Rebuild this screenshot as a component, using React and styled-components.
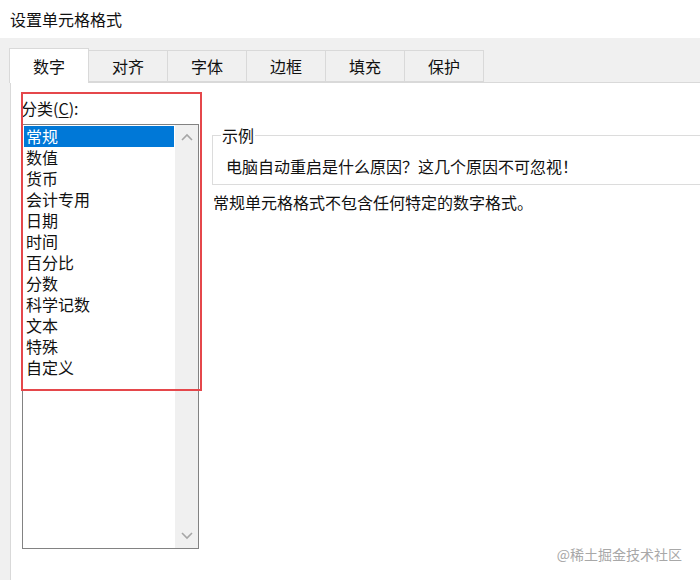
import React from "react";
import styled, { createGlobalStyle } from "styled-components";

const GlobalStyle = createGlobalStyle`
  html, body {
    margin: 0;
    padding: 0;
    background: #ffffff;
  }
  body {
    font-family: "Noto Sans CJK SC", "Noto Sans", sans-serif;
    color: #111111;
  }
`;

const categories = [
  "常规", "数值", "货币", "会计专用", "日期", "时间",
  "百分比", "分数", "科学记数", "文本", "特殊", "自定义",
];

const tabs = ["数字", "对齐", "字体", "边框", "填充", "保护"];

const Dialog = styled.div`
  width: 700px;
  height: 580px;
  display: flex;
  flex-direction: column;
  overflow: hidden;
  position: relative;
`;

const TitleBar = styled.div`
  height: 38px;
  display: flex;
  align-items: center;
  padding-left: 10px;
  font-size: 16px;
  line-height: 20px;
  background: #ffffff;
  flex-shrink: 0;
`;

const Body = styled.div`
  flex: 1;
  display: flex;
  flex-direction: column;
  background: #f0f0f0;
  padding: 10px 0 0 10px;
`;

const TabStrip = styled.div`
  display: flex;
  align-items: flex-start;
  height: 34px;
  position: relative;
  z-index: 1;
`;

const Tab = styled.div`
  box-sizing: border-box;
  display: flex;
  align-items: center;
  justify-content: center;
  font-size: 16px;
  line-height: 20px;
  border: 1px solid #d9d9d9;
  margin-left: -1px;
  ${(p) =>
    p.$active
      ? `
    width: 80px;
    height: 35px;
    background: #ffffff;
    border-bottom: none;
  `
      : `
    width: 80px;
    height: 32px;
    margin-top: 2px;
    background: #f0f0f0;
  `}
`;

const Panel = styled.div`
  flex: 1;
  position: relative;
  display: flex;
  background: #ffffff;
  border-left: 1px solid #d9d9d9;
  border-top: 1px solid #d9d9d9;
  padding: 15px 0 0 11px;
`;

const CategoryColumn = styled.div`
  display: flex;
  flex-direction: column;
  width: 177px;
  flex-shrink: 0;
`;

const FieldLabel = styled.div`
  font-size: 16px;
  line-height: 20px;
  margin-left: -1px;

  u {
    text-underline-offset: 2px;
  }
`;

const ListBox = styled.div`
  box-sizing: border-box;
  margin-top: 6px;
  width: 177px;
  height: 425px;
  border: 1px solid #828282;
  display: flex;
`;

const Items = styled.div`
  flex: 1;
  padding: 1px;
  display: flex;
  flex-direction: column;
`;

const Item = styled.div`
  height: 21px;
  line-height: 21px;
  font-size: 16px;
  padding-left: 2px;
  background: ${(p) => (p.$selected ? "#0078d7" : "transparent")};
  color: ${(p) => (p.$selected ? "#ffffff" : "#111111")};
`;

const ScrollBar = styled.div`
  width: 23px;
  background: #f0f0f0;
  display: flex;
  flex-direction: column;
  justify-content: space-between;
  align-items: center;
  padding: 8px 0;
`;

const RightColumn = styled.div`
  flex: 1;
  margin-left: 13px;
  padding-top: 27px;
  display: flex;
  flex-direction: column;
`;

const SampleBox = styled.fieldset`
  margin: 0 -2px 0 0;
  border: 1px solid #dcdcdc;
  border-right: none;
  padding: 0 0 8px 8px;
  min-width: 0;
`;

const Legend = styled.legend`
  padding: 0 1px;
  font-size: 16px;
  line-height: 20px;
`;

const SampleText = styled.div`
  margin-top: 11px;
  padding-left: 5px;
  font-size: 16px;
  line-height: 20px;
  white-space: nowrap;
`;

const Description = styled.div`
  margin-top: 7px;
  margin-left: 1px;
  font-size: 16px;
  line-height: 20px;
  white-space: nowrap;
`;

const Highlight = styled.div`
  position: absolute;
  left: 10px;
  top: 9px;
  width: 181px;
  height: 299px;
  box-sizing: border-box;
  border: 2px solid #e5474b;
  pointer-events: none;
`;

const Watermark = styled.div`
  position: absolute;
  right: 18px;
  bottom: 17px;
  font-size: 14px;
  line-height: 18px;
  color: #a8a8a8;
`;

const Chevron = ({ up }) => (
  <svg width="12" height="8" viewBox="0 0 12 8">
    <path
      d={up ? "M1 7 L6 2 L11 7" : "M1 1 L6 6 L11 1"}
      fill="none"
      stroke="#a6a6a6"
      strokeWidth="1.6"
    />
  </svg>
);

export default function App() {
  return (
    <>
      <GlobalStyle />
      <Dialog>
        <TitleBar>设置单元格格式</TitleBar>
        <Body>
          <TabStrip>
            {tabs.map((t, i) => (
              <Tab key={t} $active={i === 0}>
                {t}
              </Tab>
            ))}
          </TabStrip>
          <Panel>
            <CategoryColumn>
              <FieldLabel>
                分类(<u>C</u>):
              </FieldLabel>
              <ListBox>
                <Items>
                  {categories.map((c, i) => (
                    <Item key={c} $selected={i === 0}>
                      {c}
                    </Item>
                  ))}
                </Items>
                <ScrollBar>
                  <Chevron up />
                  <Chevron />
                </ScrollBar>
              </ListBox>
            </CategoryColumn>
            <RightColumn>
              <SampleBox>
                <Legend>示例</Legend>
                <SampleText>电脑自动重启是什么原因？这几个原因不可忽视！</SampleText>
              </SampleBox>
              <Description>常规单元格格式不包含任何特定的数字格式。</Description>
            </RightColumn>
            <Highlight />
          </Panel>
        </Body>
        <Watermark>@稀土掘金技术社区</Watermark>
      </Dialog>
    </>
  );
}
